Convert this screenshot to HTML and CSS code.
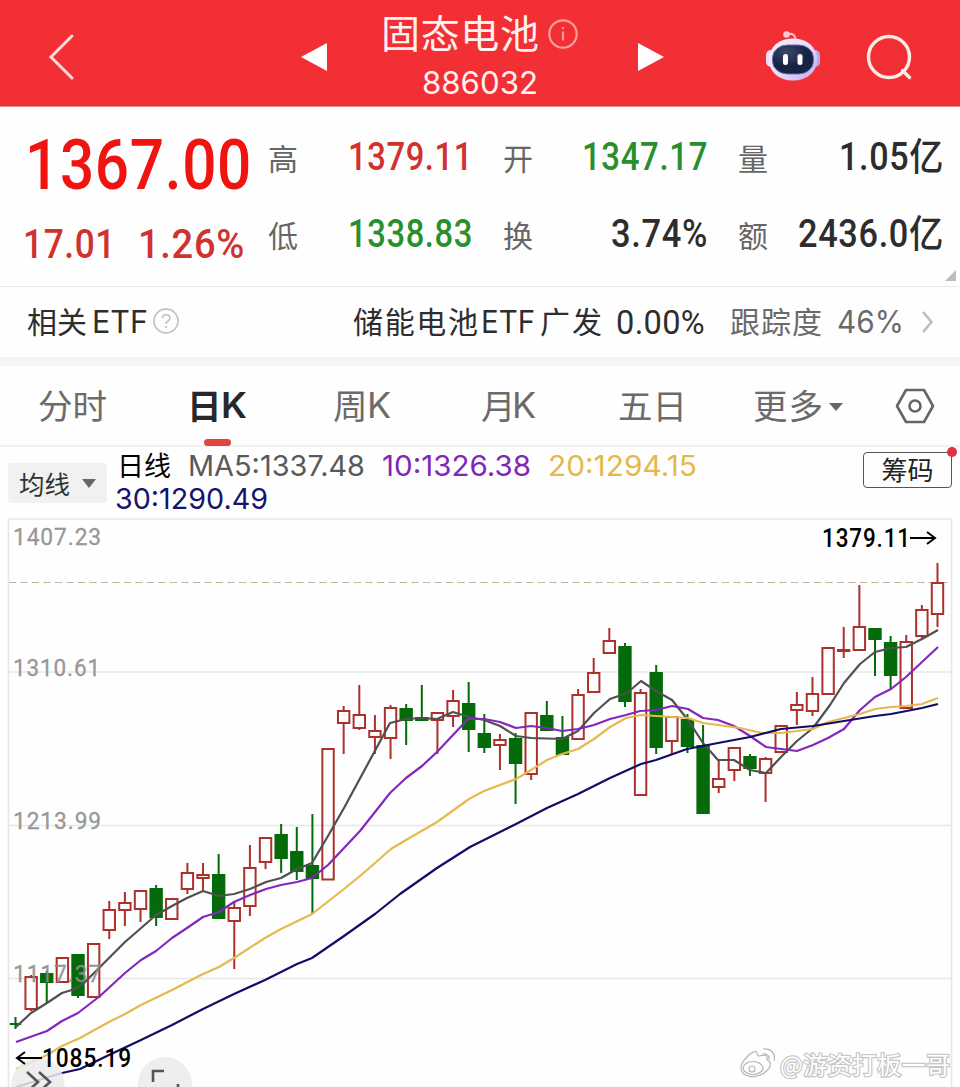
FILE: index.html
```html
<!DOCTYPE html>
<html lang="zh-CN">
<head>
<meta charset="utf-8">
<title>固态电池 886032</title>
<link rel="stylesheet" href="styles.css">
</head>
<body>
<main class="page">
  <header class="topbar">
    <svg class="back" width="30" height="50" viewBox="0 0 30 50"><path d="M25 4 4 25 25 46"/></svg>
    <svg class="arrow prev" width="26" height="28" viewBox="0 0 26 28"><path d="M26 0v28L0 14z"/></svg>
    <div class="title">
      <div class="name">
        <svg class="t" width="156" height="48"><text x="-2" y="36" font-size="39" textLength="158">固态电池</text></svg>
        <svg class="info" width="30" height="30" viewBox="0 0 30 30"><circle cx="15" cy="15" r="13.7"/><path d="M15 12.5v9M15 8v2"/></svg>
      </div>
      <svg class="t code" width="116" height="32"><text y="26" font-size="31" textLength="116" lengthAdjust="spacingAndGlyphs">886032</text></svg>
    </div>
    <svg class="arrow next" width="26" height="28" viewBox="0 0 26 28"><path d="M0 0v28l26-14z"/></svg>
    <svg class="robot" width="56" height="52" viewBox="0 0 56 52">
      <defs>
        <linearGradient id="shell" x1="0" y1="0" x2="1" y2="1"><stop offset="0" stop-color="#fff0fa"/><stop offset=".55" stop-color="#ead9f8"/><stop offset="1" stop-color="#bda6ec"/></linearGradient>
        <radialGradient id="visor" cx=".35" cy=".25"><stop offset="0" stop-color="#3a486b"/><stop offset="1" stop-color="#172342"/></radialGradient>
      </defs>
      <path d="M22 5c6-1 8 1 9 6" fill="none" stroke="#ffc3ca" stroke-width="2"/>
      <circle cx="21.500" cy="5.500" r="3.300" fill="#ffc9cd"/>
      <rect x="1" y="21" width="10" height="17" rx="5" fill="#eadff8"/><rect x="45" y="21" width="10" height="17" rx="5" fill="#bba8f2"/>
      <rect x="4" y="9.500" width="48" height="42" rx="23" ry="20" fill="url(#shell)"/>
      <rect x="7.500" y="16" width="41" height="29" rx="15" ry="13" fill="url(#visor)" stroke="#6870ad" stroke-width="1"/>
      <rect x="18" y="25" width="5" height="11" rx="2.500" fill="#fff"/><rect x="32.500" y="25" width="5" height="11" rx="2.500" fill="#fff"/>
    </svg>
    <svg class="search" width="48" height="48" viewBox="0 0 48 48"><circle cx="23" cy="23" r="20.500"/><path d="m36.500 36.500 7 7"/></svg>
  </header>

  <section class="quote">
    <div class="last">
      <svg class="din red strong" width="226" height="70"><text x="1" y="59" font-size="69.500" textLength="227" lengthAdjust="spacingAndGlyphs">1367.00</text></svg>
      <div class="change">
        <svg class="din crimson" width="91" height="45"><text y="38" font-size="41" textLength="93" lengthAdjust="spacingAndGlyphs">17.01</text></svg>
        <svg class="din crimson" width="105" height="45"><text y="38" font-size="41" textLength="107" lengthAdjust="spacingAndGlyphs">1.26%</text></svg>
      </div>
    </div>
    <div class="stats">
      <div class="stat"><span>高</span><svg class="din crimson" width="123" height="40"><text y="33" font-size="38" textLength="125" lengthAdjust="spacingAndGlyphs">1379.11</text></svg></div>
      <div class="stat"><span>开</span><svg class="din green" width="124" height="40"><text y="33" font-size="38" textLength="126" lengthAdjust="spacingAndGlyphs">1347.17</text></svg></div>
      <div class="stat"><span>量</span><svg class="din ink" width="104" height="40"><text y="33" font-size="38" textLength="105" lengthAdjust="spacingAndGlyphs">1.05亿</text></svg></div>
      <div class="stat"><span>低</span><svg class="din green" width="123" height="40"><text y="33" font-size="38" textLength="125" lengthAdjust="spacingAndGlyphs">1338.83</text></svg></div>
      <div class="stat"><span>换</span><svg class="din ink" width="95" height="40"><text y="33" font-size="38" textLength="97" lengthAdjust="spacingAndGlyphs">3.74%</text></svg></div>
      <div class="stat"><span>额</span><svg class="din ink" width="145" height="40"><text y="33" font-size="38" textLength="146" lengthAdjust="spacingAndGlyphs">2436.0亿</text></svg></div>
    </div>
    <svg class="corner" width="11" height="11" viewBox="0 0 11 11"><path d="M11 0v11H0z"/></svg>
  </section>

  <section class="etf">
    <svg class="t ink" width="120" height="44"><text y="33" font-size="30" textLength="60">相关</text><text class="latin" x="65" y="33" font-size="31" textLength="56" lengthAdjust="spacingAndGlyphs">ETF</text></svg>
    <svg class="help" width="26" height="26" viewBox="0 0 26 26"><circle cx="13" cy="13" r="12"/><path d="M9.500 10.500c0-5 7.500-5 7.500-.5 0 3-4 3-4 6M13 18v2"/></svg>
    <svg class="t ink fund" width="248" height="44"><text y="33" font-size="30" textLength="125">储能电池</text><text class="latin" x="128" y="33" font-size="31" textLength="54" lengthAdjust="spacingAndGlyphs">ETF</text><text x="187" y="33" font-size="30" textLength="62">广发</text></svg>
    <svg class="din thin ink pct" width="88" height="44"><text y="34" font-size="34" textLength="89" lengthAdjust="spacingAndGlyphs">0.00%</text></svg>
    <svg class="t grey track" width="92" height="44"><text y="33" font-size="30" textLength="92">跟踪度</text></svg>
    <svg class="t grey deg" width="68" height="44"><text y="33" font-size="31" textLength="67" lengthAdjust="spacingAndGlyphs">46%</text></svg>
    <svg class="chev" width="14" height="24" viewBox="0 0 14 24"><path d="m3 2 8.500 10L3 22"/></svg>
  </section>

  <nav class="tabs">
    <div class="tab"><svg class="t" width="69" height="50"><text y="37" font-size="34.500" textLength="69">分时</text></svg></div>
    <div class="tab active"><svg class="t" width="58" height="50"><text x="-4" y="37" font-size="34.500">日</text><text class="latin" x="30" y="36" font-size="36" textLength="26" lengthAdjust="spacingAndGlyphs">K</text></svg></div>
    <div class="tab"><svg class="t" width="60" height="50"><text y="37" font-size="34.500">周</text><text class="latin" x="34" y="36" font-size="36">K</text></svg></div>
    <div class="tab"><svg class="t" width="60" height="50"><text y="37" font-size="34.500">月</text><text class="latin" x="31" y="36" font-size="36">K</text></svg></div>
    <div class="tab"><svg class="t" width="69" height="50"><text y="37" font-size="34.500" textLength="69">五日</text></svg></div>
    <div class="tab more"><svg class="t" width="70" height="50"><text y="37" font-size="34.500" textLength="70">更多</text></svg><svg class="caret" width="16" height="10" viewBox="0 0 16 10"><path d="M1 1h14L8 9z"/></svg></div>
    <svg class="hex" width="40" height="36" viewBox="0 0 40 36"><path d="M11 2h18l9 16-9 16H11L2 18z"/><circle cx="20" cy="18" r="5.500"/></svg>
  </nav>

  <section class="legend">
    <div class="picker"><span>均线</span><svg class="caret" width="16" height="11" viewBox="0 0 16 11"><path d="M1 1h14L8 10z"/></svg></div>
    <div class="averages">
      <div class="line">
        <svg class="t black" width="54" height="32"><text y="28" font-size="27" textLength="54">日线</text></svg>
        <svg class="t ma5" width="178" height="32"><text y="28" font-size="28.500" textLength="177" lengthAdjust="spacingAndGlyphs">MA5:1337.48</text></svg>
        <svg class="t ma10" width="149" height="32"><text y="28" font-size="28.500" textLength="149" lengthAdjust="spacingAndGlyphs">10:1326.38</text></svg>
        <svg class="t ma20" width="149" height="32"><text y="28" font-size="28.500" textLength="149" lengthAdjust="spacingAndGlyphs">20:1294.15</text></svg>
      </div>
      <svg class="t ma30" width="153" height="32"><text y="29" font-size="28.500" textLength="153" lengthAdjust="spacingAndGlyphs">30:1290.49</text></svg>
    </div>
    <div class="chips">筹码<i class="dot"></i></div>
  </section>

  <svg class="chart" width="960" height="573" viewBox="0 514 960 573">
    <g class="grid"><path d="M8.500 1087V519h943v568M8.500 672h943M8.500 825.500h943M8.500 978.500h943"/></g>
    <path class="last-line" d="M9 582.500h942"/>
    <g id="candles"></g>
    <g id="lines"></g>
    <g class="axis">
      <text x="13" y="545" textLength="89" lengthAdjust="spacingAndGlyphs">1407.23</text>
      <text x="13" y="676" textLength="88" lengthAdjust="spacingAndGlyphs">1310.61</text>
      <text x="13" y="829" textLength="89" lengthAdjust="spacingAndGlyphs">1213.99</text>
      <text x="13" y="982" textLength="89" lengthAdjust="spacingAndGlyphs">1117.37</text>
    </g>
    <g class="marks">
      <circle cx="38" cy="1084" r="26.500"/><circle cx="165" cy="1084" r="27"/>
      <path d="m27 1072 11 10-11 10M39 1072l11 10-11 10M153 1082v-11h11M178 1084v6"/>
    </g>
    <g class="extreme">
      <text x="822" y="547" textLength="89" lengthAdjust="spacingAndGlyphs">1379.11</text>
      <path d="M910 538h25M927 532l8 6-8 6"/>
      <text x="42" y="1067" textLength="90" lengthAdjust="spacingAndGlyphs">1085.19</text>
      <path d="M42 1058H17M25 1052l-8 6 8 6"/>
    </g>
    <g class="watermark">
      <path d="M746 1058c5-6 10-8 11-5 1 2 0 3 2 3 6-2 9-1 8 4 6 2 3 9-3 13-10 7-23 3-23-5 0-3 2-7 5-10z"/>
      <ellipse cx="753" cy="1068" rx="10" ry="6.500"/><circle cx="752" cy="1069" r="3"/>
      <path d="M763 1054c4-1 7 2 6 6M763 1049c8-1 13 5 11 12"/>
      <text x="780" y="1074" font-size="24" textLength="170">@游资打板一哥</text>
    </g>
  </svg>
</main>
<script src="chart.js"></script>
</body>
</html>
```
FILE: styles.css
```css
* { box-sizing: border-box; }
body { margin: 0; background: #fff; font-family: Inter, "Noto Sans CJK SC", sans-serif; }
svg { display: block; flex: none; overflow: visible; }
.page { width: 960px; height: 1087px; overflow: hidden; background: #fefefe; }

.t { font-family: Inter, "Noto Sans CJK SC", sans-serif; fill: currentColor; }
.latin { font-family: Inter, sans-serif; }
.din { font-family: Roboto, "Noto Sans CJK SC", sans-serif; font-weight: 500; fill: currentColor; letter-spacing: .045em; }
.din.thin { font-weight: 400; }
.red { color: #f01410; }
.crimson { color: #cf322f; }
.green { color: #298f2c; }
.ink { color: #2d2d2d; }
.grey { color: #6a6a6a; }
.black { color: #000; }

.topbar { display: flex; height: 107px; background: #f12f35; border-bottom: 1px solid #e98587; color: #fff1ef; }
.back { margin: 32px 0 0 47px; }
.back path { fill: none; stroke: #ffd9d7; stroke-width: 3; stroke-linecap: round; }
.arrow { fill: #fff; margin-top: 43px; }
.prev { margin-left: 224px; }
.title { width: 197px; margin-left: 56px; padding-top: 12px; }
.name { display: flex; gap: 9px; }
.info { margin-top: 7px; }
.info circle, .info path { fill: none; stroke: #ff9c9c; stroke-width: 2.2; }
.code { margin: 8px 0 0 39px; }
.next { margin-left: 58px; }
.robot { margin: 29px 0 0 101px; }
.search { margin: 34px 0 0 45px; }
.search circle, .search path { fill: none; stroke: #ffe9e7; stroke-width: 3.4; stroke-linecap: round; }

.quote { position: relative; display: flex; height: 180px; padding: 23px 0 0 24px; border-bottom: 1px solid #e9e9e9; }
.last { width: 244px; }
.change { display: flex; gap: 24px; margin: 20px 0 0 -1px; }
.stats { display: grid; grid-template-columns: 203px 203px 205px; grid-template-rows: 40px 40px; gap: 37px 32px; padding-top: 7px; }
.stat { display: flex; justify-content: space-between; }
.stat span { font: 400 30px/40px "Noto Sans CJK SC", sans-serif; color: #666; }
.corner { position: absolute; right: 4px; bottom: 5px; fill: #bcbcbc; }

.etf { display: flex; height: 79px; padding: 13px 0 0 27px; border-bottom: 9px solid #f5f5f5; }
.help { margin: 8px 0 0 6px; }
.help circle, .help path { fill: none; stroke: #c6c6c6; stroke-width: 1.8; }
.fund { margin-left: 174px; }
.pct { margin-left: 15px; letter-spacing: .02em; }
.track { margin-left: 26px; }
.deg { margin-left: 15px; }
.chev { margin: 10px 0 0 15px; }
.chev path { fill: none; stroke: #bdbdbd; stroke-width: 2.6; }

.tabs { display: grid; grid-template-columns: 153px 142px 148px 137px 135px 142px 40px; height: 81px; padding: 16px 0 0 38px; border-bottom: 2px solid #f1f1f1; color: #6b6b6b; }
.tab { position: relative; height: 50px; }
.tab.active { color: #282828; font-weight: 700; }
.tab.active::after { content: ""; position: absolute; left: 13px; top: 57px; width: 27px; height: 7px; border-radius: 4px; background: #df4640; }
.tab.active .latin { font-weight: 600; }
.more { display: flex; gap: 5px; }
.more .caret { margin-top: 20px; }
.caret { fill: #666; }
.hex { margin-top: 6px; }
.hex path, .hex circle { fill: none; stroke: #666; stroke-width: 2.6; stroke-linejoin: round; }

.legend { display: flex; height: 67px; padding-left: 8px; }
.picker { display: flex; align-items: center; gap: 11px; width: 99px; height: 40px; margin-top: 16px; padding-left: 11px; border-radius: 4px; background: #f1f1f1; color: #333; font: 25.500px/38px "Noto Sans CJK SC", sans-serif; }
.averages { width: 756px; padding: 1px 0 0 10px; }
.line { display: flex; gap: 17px; }
.ma5 { color: #595959; }
.ma10 { color: #8026b8; margin-left: -1px; }
.ma20 { color: #e4b947; }
.ma30 { color: #15146d; margin: 0 0 0 -2px; }
.chips { position: relative; width: 89px; height: 36px; margin-top: 5px; border: 1.500px solid #555; border-radius: 4px; color: #222; text-align: center; font: 26px/32px "Noto Sans CJK SC", sans-serif; }
.dot { position: absolute; right: -6px; top: -6px; width: 10px; height: 10px; border-radius: 50%; background: #dc343e; }

.grid path { fill: none; stroke: #e7e7e7; stroke-width: 1.6; }
.last-line { stroke: #b9b69a; stroke-width: 1.2; stroke-dasharray: 7 4.500; }
.up { fill: none; stroke: #ac312c; stroke-width: 2; }
.down { fill: #056a0a; stroke: #056a0a; stroke-width: 2; }
.avg { fill: none; stroke-width: 2.2; stroke-linejoin: round; }
.axis text { font: 400 24.500px Roboto, sans-serif; letter-spacing: .04em; fill: #8d8d8d; fill-opacity: .9; stroke: #8d8d8d; stroke-width: .3px; }
.extreme text { font: 500 25.500px Roboto, sans-serif; letter-spacing: .04em; fill: #000; }
.extreme path { fill: none; stroke: #000; stroke-width: 2; }
.marks circle { fill: #ebebeb; fill-opacity: .86; }
.marks path { fill: none; stroke: #555; stroke-width: 2.6; }
.watermark { fill: #fff; stroke: #b5b5b5; stroke-width: 1.2; }
.watermark path, .watermark ellipse { fill: none; }
.watermark text { font-family: "Noto Sans CJK SC", sans-serif; font-weight: 400; stroke: #c6c6c6; stroke-width: 2.4px; paint-order: stroke; }
```
FILE: chart.js
```js
// Candle rows: colour, body top, body bottom, wick top, wick bottom.
const candles = `g 1024 1024 1017 1029|r 977 1009 975 1011|g 974 982 971 1003|r 958 982 958 982|g 955 995 955 998|r 944 997 944 997
r 910 930 901 939|r 903 910 892 926|r 891 909 891 922|g 889 917 885 926|r 899 919 899 919|r 873 889 863 894
r 875 878 863 890|g 875 918 854 918|r 908 921 901 969|r 868 906 845 916|r 838 862 838 869|g 835 858 824 873
g 852 871 827 880|g 866 878 814 914|r 749 879.5 749 879|r 711 723 706 754|r 715 728 685 730|r 731 737 715 754
r 708 738 705 759|g 709 720 704 745|g 718 720 685 721|r 713 720 713 754|r 701 716 690 727|g 704 729 682 752
g 734 747 714 753|r 740 745 734 770|g 739 763 733 804|r 713 774 713 780|g 716 730 701 730|g 738 754 716 754
r 695 739 689 739|r 673 692 658 692|r 641 653 628 653|g 647 701 643 707|r 693 795 689 795|g 673 747 665 754
r 717 741 717 755|g 720 746 714 753|g 746 813 725 813|r 779 787 760 793|r 748 770 748 781|g 757 768 754 776
r 759 773 757 802|r 726 752 726 752|r 705 710 692 725|r 694 711 677 716|r 648 694 648 694|r 650 651 627 658
r 627 650 585 650|g 629 639 628 676|g 643 675 636 689|r 642 708 635 708|r 610 636 605 638|r 583 614 563 627`;

const averages = [
  ["#505050", "16 1027 31 1013 47 1003 62 993 75 989 85 982 96 971 109 958 125 942 140 929 156 915 172 906 187 898 203 891 219 896 234 894 250 889 266 882 281 878 297 869 312 863 328 836 344 808 390 723 406 719 422 718 437 719 453 712 469 717 484 720 500 726 516 736 531 738 562 739 578 731 594 713 610 699 627 693 641 681 656 691 672 700 688 720 703 743 718 760 734 760 750 770 766 773 782 756 797 741 813 728 830 705 844 683 860 664 875 652 891 648 906 647 922 639 938 630"],
  ["#8526bd", "16 1042 47 1031 62 1021 78 1013 100 996 125 973 141 960 156 951 172 938 187 928 203 917 219 912 234 902 250 895 266 889 281 885 297 882 312 878 328 865 344 848 360 831 375 812 390 793 406 778 422 766 437 752 453 735 468 719 484 719 500 722 516 728 531 726 547 728 562 731 578 729 594 725 610 719 626 715 640 711 656 710 672 706 688 709 703 718 718 720 734 726 750 736 766 747 781 749 797 751 813 745 828 738 844 729 860 710 875 697 891 689 906 677 922 662 938 647"],
  ["#e6b94e", "16 1069 47 1055 62 1046 80 1038 109 1022 125 1014 141 1005 172 990 203 974 219 967 234 958 265 938 281 929 312 914 344 889 360 876 375 863 391 849 406 840 437 822 469 799 484 791 516 779 531 770 547 760 562 754 578 749 594 739 610 727 626 718 641 715 672 717 688 718 703 723 718 725 740 728 762 733 781 733 797 731 813 729 828 722 844 718 860 714 875 709 891 707 906 706 922 704 938 698"],
  ["#100c68", "16 1087 62 1073 80 1069 109 1055 141 1040 172 1025 203 1009 234 994 265 980 281 972 297 964 312 958 344 936 375 914 400 894 437 868 470 847 500 832 516 824 547 808 578 794 610 778 641 764 656 760 687 749 718 743 750 737 781 729 813 726 844 721 875 716 891 714 922 708 938 704"]
];

const step = 15.627;
document.getElementById("candles").innerHTML = candles.split(/[|\n]/).map((row, i) => {
  const [kind, ...values] = row.split(" ");
  const [top, bottom, high, low] = values.map(Number);
  const x = 15.5 + step * i;
  const body = `M${x - 5.7} ${top}h11.4V${bottom}h-11.4z`;
  return `<path class="${kind === "r" ? "up" : "down"}" d="${body}M${x} ${high}V${top}M${x} ${bottom}V${low}"/>`;
}).join("");
document.getElementById("lines").innerHTML = averages.map(([color, points]) =>
  `<polyline class="avg" stroke="${color}" points="${points}"/>`).join("");
```
